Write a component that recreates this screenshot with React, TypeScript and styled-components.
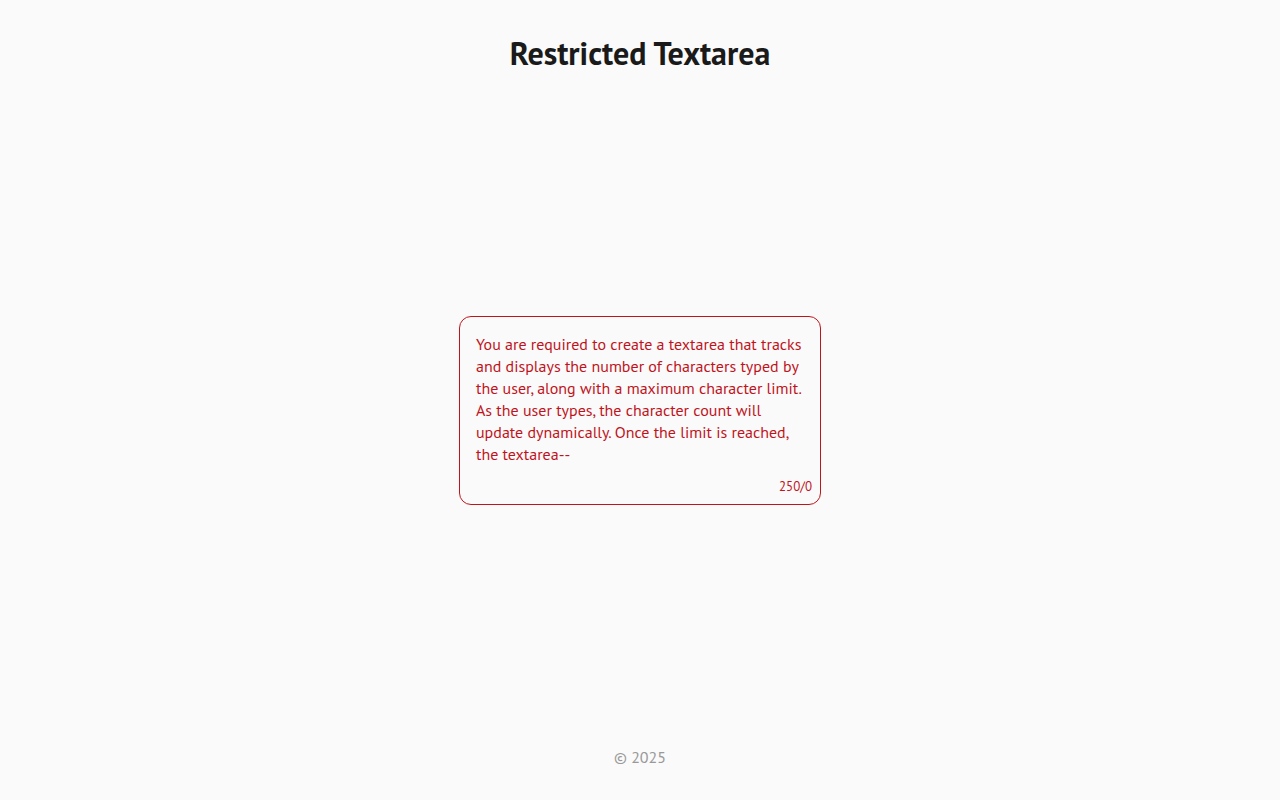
import React, { useState } from "react";
import styled, { createGlobalStyle } from "styled-components";

const Global = createGlobalStyle`
  * { box-sizing: border-box; }
  html, body { margin: 0; padding: 0; }
  body {
    background: #fafafa;
    font-family: "PT Sans", Lato, "Liberation Sans", sans-serif;
  }
`;

const Page = styled.div`
  min-height: 100vh;
  display: flex;
  flex-direction: column;
  align-items: center;
`;

const Title = styled.h1`
  margin: 33px 0 0;
  font-size: 32px;
  line-height: 40px;
  font-weight: 700;
  color: #1a1a1a;
`;

const Main = styled.main`
  flex: 1;
  display: flex;
  align-items: center;
  justify-content: center;
  width: 100%;
`;

const Box = styled.div`
  width: 362px;
  border: 1px solid #c0141c;
  border-radius: 12px;
  display: flex;
  flex-direction: column;
  margin-top: 0;
`;

const Area = styled.textarea`
  border: none;
  outline: none;
  resize: none;
  background: transparent;
  font-family: inherit;
  font-size: 16px;
  line-height: 22px;
  color: #c0141c;
  padding: 16px 16px 8px;
  height: 156px;
  overflow: hidden;
`;

const Counter = styled.div`
  align-self: flex-end;
  font-size: 13px;
  line-height: 16px;
  color: #c0141c;
  padding: 6px 8px 9px;
`;

const Footer = styled.footer`
  font-size: 16px;
  line-height: 20px;
  color: #999;
  padding: 0 0 33px;
`;

const initial =
  "You are required to create a textarea that tracks and displays the number of characters typed by the user, along with a maximum character limit. As the user types, the character count will update dynamically. Once the limit is reached, the textarea--";

export default function App() {
  const [text, setText] = useState(initial);
  const max = 250;
  return (
    <>
      <Global />
      <Page>
        <Title>Restricted Textarea</Title>
        <Main>
          <Box>
            <Area
              value={text}
              maxLength={max}
              onChange={(e) => setText(e.target.value)}
            />
            <Counter>
              {max}/{max - text.length}
            </Counter>
          </Box>
        </Main>
        <Footer>© 2025</Footer>
      </Page>
    </>
  );
}
